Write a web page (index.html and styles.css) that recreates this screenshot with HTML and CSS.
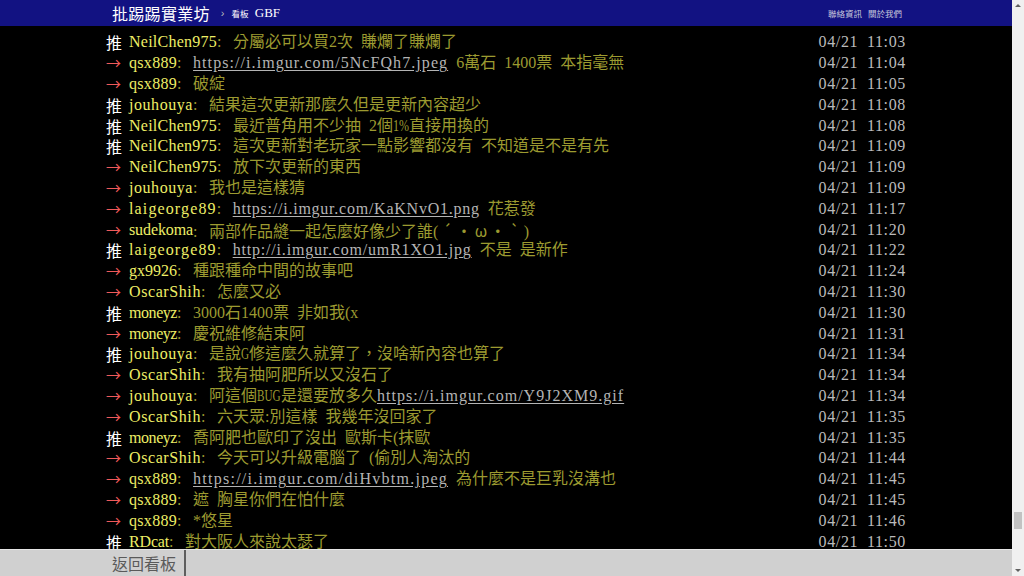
FILE: index.html
```html
<!DOCTYPE html>
<html lang="zh-Hant">
<head>
<meta charset="utf-8">
<title>GBF - 批踢踢實業坊</title>
<link rel="stylesheet" href="styles.css">
</head>
<body>
<div class="page">
  <header class="topbar">
    <div class="topbar-inner">
      <a class="site" href="#">批踢踢實業坊</a>
      <span class="sep">›</span>
      <a class="board" href="#"><span class="board-label">看板</span> GBF</a>
      <nav class="links">
        <a href="#">聯絡資訊</a>
        <a href="#">關於我們</a>
      </nav>
    </div>
  </header>

  <main class="main">
    <div class="push"><span class="tag good">推</span><span class="user id-neil">NeilChen975</span><span class="content"><span class="c">:</span>分屬必可以買2次 賺爛了賺爛了</span><span class="time">04/21 11:03</span></div>
    <div class="push"><span class="tag arrow">→</span><span class="user id-qsx">qsx889</span><span class="content"><span class="c">:</span><a class="url url-a" href="#">https://i.imgur.com/5NcFQh7.jpeg</a> 6萬石 1400票 本指毫無</span><span class="time">04/21 11:04</span></div>
    <div class="push"><span class="tag arrow">→</span><span class="user id-qsx">qsx889</span><span class="content"><span class="c">:</span>破綻</span><span class="time">04/21 11:05</span></div>
    <div class="push"><span class="tag good">推</span><span class="user id-jou">jouhouya</span><span class="content"><span class="c">:</span>結果這次更新那麼久但是更新內容超少</span><span class="time">04/21 11:08</span></div>
    <div class="push"><span class="tag good">推</span><span class="user id-neil">NeilChen975</span><span class="content"><span class="c">:</span>最近普角用不少抽 2個<span class="pct">1%</span>直接用換的</span><span class="time">04/21 11:08</span></div>
    <div class="push"><span class="tag good">推</span><span class="user id-neil">NeilChen975</span><span class="content"><span class="c">:</span>這次更新對老玩家一點影響都沒有 不知道是不是有先</span><span class="time">04/21 11:09</span></div>
    <div class="push"><span class="tag arrow">→</span><span class="user id-neil">NeilChen975</span><span class="content"><span class="c">:</span>放下次更新的東西</span><span class="time">04/21 11:09</span></div>
    <div class="push"><span class="tag arrow">→</span><span class="user id-jou">jouhouya</span><span class="content"><span class="c">:</span>我也是這樣猜</span><span class="time">04/21 11:09</span></div>
    <div class="push"><span class="tag arrow">→</span><span class="user id-lai">laigeorge89</span><span class="content"><span class="c">:</span><a class="url url-b" href="#">https://i.imgur.com/KaKNvO1.png</a> 花惹發</span><span class="time">04/21 11:17</span></div>
    <div class="push"><span class="tag arrow">→</span><span class="user id-sude">sudekoma</span><span class="content"><span class="c">:</span>兩部作品縫一起怎麼好像少了誰(<span class="w">´</span>・<span class="w">ω</span>・<span class="w">`</span>)</span><span class="time">04/21 11:20</span></div>
    <div class="push"><span class="tag good">推</span><span class="user id-lai">laigeorge89</span><span class="content"><span class="c">:</span><a class="url url-c" href="#">http://i.imgur.com/umR1XO1.jpg</a> 不是 是新作</span><span class="time">04/21 11:22</span></div>
    <div class="push"><span class="tag arrow">→</span><span class="user id-gx">gx9926</span><span class="content"><span class="c">:</span>種跟種命中間的故事吧</span><span class="time">04/21 11:24</span></div>
    <div class="push"><span class="tag arrow">→</span><span class="user id-oscar">OscarShih</span><span class="content"><span class="c">:</span>怎麼又必</span><span class="time">04/21 11:30</span></div>
    <div class="push"><span class="tag good">推</span><span class="user id-money">moneyz</span><span class="content"><span class="c">:</span>3000石1400票 非如我(x</span><span class="time">04/21 11:30</span></div>
    <div class="push"><span class="tag arrow">→</span><span class="user id-money">moneyz</span><span class="content"><span class="c">:</span>慶祝維修結束阿</span><span class="time">04/21 11:31</span></div>
    <div class="push"><span class="tag good">推</span><span class="user id-jou">jouhouya</span><span class="content"><span class="c">:</span>是說<span class="cond cond-1">G</span>修這麼久就算了，沒啥新內容也算了</span><span class="time">04/21 11:34</span></div>
    <div class="push"><span class="tag arrow">→</span><span class="user id-oscar">OscarShih</span><span class="content"><span class="c">:</span>我有抽阿肥所以又沒石了</span><span class="time">04/21 11:34</span></div>
    <div class="push"><span class="tag arrow">→</span><span class="user id-jou">jouhouya</span><span class="content"><span class="c">:</span>阿這個<span class="cond cond-3">BUG</span>是還要放多久<a class="url url-d" href="#">https://i.imgur.com/Y9J2XM9.gif</a></span><span class="time">04/21 11:34</span></div>
    <div class="push"><span class="tag arrow">→</span><span class="user id-oscar">OscarShih</span><span class="content"><span class="c">:</span>六天眾:別這樣 我幾年沒回家了</span><span class="time">04/21 11:35</span></div>
    <div class="push"><span class="tag good">推</span><span class="user id-money">moneyz</span><span class="content"><span class="c">:</span>喬阿肥也歐印了沒出 歐斯卡(抹歐</span><span class="time">04/21 11:35</span></div>
    <div class="push"><span class="tag arrow">→</span><span class="user id-oscar">OscarShih</span><span class="content"><span class="c">:</span>今天可以升級電腦了 (偷別人淘汰的</span><span class="time">04/21 11:44</span></div>
    <div class="push"><span class="tag arrow">→</span><span class="user id-qsx">qsx889</span><span class="content"><span class="c">:</span><a class="url url-e" href="#">https://i.imgur.com/diHvbtm.jpeg</a> 為什麼不是巨乳沒溝也</span><span class="time">04/21 11:45</span></div>
    <div class="push"><span class="tag arrow">→</span><span class="user id-qsx">qsx889</span><span class="content"><span class="c">:</span>遮 胸星你們在怕什麼</span><span class="time">04/21 11:45</span></div>
    <div class="push"><span class="tag arrow">→</span><span class="user id-qsx">qsx889</span><span class="content"><span class="c">:</span>*悠星</span><span class="time">04/21 11:46</span></div>
    <div class="push"><span class="tag good">推</span><span class="user id-rd">RDcat</span><span class="content"><span class="c">:</span>對大阪人來說太瑟了</span><span class="time">04/21 11:50</span></div>
  </main>
</div>

<footer class="bottombar">
  <div class="bottombar-inner">
    <a class="back" href="#">返回看板</a>
  </div>
</footer>

<div class="scrollbar">
  <span class="sb-up"></span>
  <span class="sb-thumb"></span>
  <span class="sb-down"></span>
</div>
</body>
</html>
```

FILE: styles.css
```css
html, body {
  margin: 0;
  padding: 0;
  height: 100%;
}

body {
  background: #000;
  color: #bbb;
  font-family: "Liberation Serif", "Noto Sans CJK TC", serif;
  overflow: hidden;
}

a {
  color: inherit;
  text-decoration: none;
}

.page {
  margin-right: 12px;
}

/* ---------- top bar ---------- */
.topbar {
  height: 26px;
  background: #121282;
}

.topbar-inner {
  width: 800px;
  height: 100%;
  margin: 0 auto;
  padding: 0 4px 0 6px;
  box-sizing: border-box;
  display: flex;
  align-items: center;
  color: #fff;
}

.site {
  font-family: "Noto Sans CJK TC", sans-serif;
  font-size: 16px;
  color: #fff;
  line-height: 26px;
  letter-spacing: 0.3px;
}

.sep {
  font-family: "Liberation Sans", sans-serif;
  font-size: 11px;
  color: #bbb;
  margin: 0 7px 0 11px;
}

.board {
  font-family: "Liberation Serif", serif;
  font-size: 13px;
  color: #fff;
}

.board-label {
  font-family: "Noto Sans CJK TC", sans-serif;
  font-size: 8.5px;
  margin-right: 3px;
}

.links {
  margin-left: auto;
  display: flex;
  gap: 6px;
}

.links a {
  font-family: "Noto Sans CJK TC", sans-serif;
  font-size: 8.5px;
  color: #c8c8dc;
}

/* ---------- push list ---------- */
.main {
  width: 800px;
  margin: 0 auto;
  padding-top: 6.4px;
}

.push {
  display: flex;
  height: 20.8px;
  line-height: 20.8px;
  font-size: 16px;
  white-space: nowrap;
  word-spacing: 4px;
}

.tag {
  flex: none;
  width: 23px;
  font-family: "Noto Sans CJK TC", sans-serif;
}

.tag.good {
  color: #fff;
}

.tag.arrow {
  color: #f05a5a;
  font-size: 15px;
}

.user {
  flex: none;
  color: #eeee66;
}

/* spacing tuned so every id fills its half-width cells */
.id-neil { letter-spacing: 0.24px; }
.id-qsx { letter-spacing: 0.3px; }
.id-jou { letter-spacing: 0.55px; }
.id-lai { letter-spacing: 1.13px; }
.id-sude { letter-spacing: -0.11px; }
.id-gx { letter-spacing: 0; }
.id-oscar { letter-spacing: 0.59px; }
.id-money { letter-spacing: -0.44px; }
.id-rd { letter-spacing: -0.17px; }

.content {
  color: #9c9a30;
}

.c {
  display: inline-block;
  width: 2ch;
}

.url {
  color: #b4b4b4;
  text-decoration: underline;
  text-underline-offset: 2px;
}

.url-a { letter-spacing: 1.07px; }
.url-b { letter-spacing: 0.76px; }
.url-c { letter-spacing: 0.81px; }
.url-d { letter-spacing: 1.02px; }
.url-e { letter-spacing: 1.26px; }

.pct {
  display: inline-block;
  transform: scaleX(0.75);
  transform-origin: left center;
  margin-right: -5.3px;
}

.cond {
  display: inline-block;
  transform: scaleX(0.7);
  transform-origin: left center;
}

.cond-1 { margin-right: -3.5px; }
.cond-3 { margin-right: -9.8px; }

.w {
  font-family: "Noto Sans CJK TC", sans-serif;
  display: inline-block;
  width: 2ch;
  text-align: center;
}

.time {
  margin-left: auto;
  color: #bbb;
  letter-spacing: 0.65px;
}

/* ---------- bottom bar ---------- */
.bottombar {
  position: fixed;
  left: 0;
  right: 12px;
  bottom: 0;
  height: 26px;
  background: #d0d0d0;
  border-top: 1px solid #e6e6e6;
}

.bottombar-inner {
  width: 800px;
  height: 100%;
  margin: 0 auto;
  display: flex;
}

.back {
  font-family: "Noto Sans CJK TC", sans-serif;
  font-size: 16px;
  line-height: 26px;
  color: #5a5a5a;
  padding: 0 8px 0 6px;
  border-right: 2px solid #5e5e5e;
}

/* ---------- fake scrollbar ---------- */
.scrollbar {
  position: fixed;
  top: 0;
  right: 0;
  width: 12px;
  height: 100%;
  background: #f0f0f0;
}

.sb-up,
.sb-down {
  position: absolute;
  left: 3px;
  width: 0;
  height: 0;
  border-left: 3px solid transparent;
  border-right: 3px solid transparent;
}

.sb-up {
  top: 4px;
  border-bottom: 3px solid #606060;
}

.sb-down {
  bottom: 4px;
  border-top: 3px solid #606060;
}

.sb-thumb {
  position: absolute;
  left: 2px;
  width: 8px;
  top: 512px;
  height: 17px;
  background: #c2c2c2;
}
```
